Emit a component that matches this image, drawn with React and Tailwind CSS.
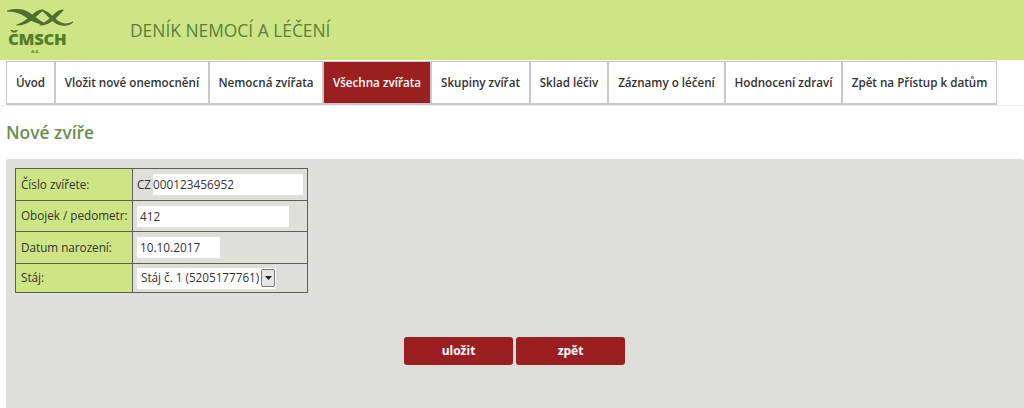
import React from 'react';

const tabs = [
  { label: 'Úvod', width: 'w-[49px]' },
  { label: 'Vložit nové onemocnění', width: 'w-[154px]' },
  { label: 'Nemocná zvířata', width: 'w-[114px]' },
  { label: 'Všechna zvířata', width: 'w-[108px]', active: true },
  { label: 'Skupiny zvířat', width: 'w-[99px]' },
  { label: 'Sklad léčiv', width: 'w-[78px]' },
  { label: 'Záznamy o léčení', width: 'w-[117px]' },
  { label: 'Hodnocení zdraví', width: 'w-[117px]' },
  { label: 'Zpět na Přístup k datům', width: 'w-[155px]' },
];

const Logo = () => (
  <div className="w-[76px] flex flex-col items-start">
    <svg width="66" height="18" viewBox="0 0 66 18" className="mt-[9px] ml-[7px]" stroke="#4f6f2f" strokeWidth="1.2" strokeLinejoin="round">
      <path d="M0 2C8 0 16 0 22 4C28 8 32 12 38 15C30 15 24 11 18 7C12 3 6 2 0 2Z" fill="#4f6f2f" />
      <path d="M10 16C18 14 22 9 27 5C30 2 33 1 36 1C32 4 28 8 24 11C20 14 15 16 10 16Z" fill="#4f6f2f" />
      <path d="M35 1C40 2 44 6 48 10C52 14 55 15 58 15C62 15 65 14 66 13C62 17 54 17 49 14C44 11 40 5 35 1Z" fill="#4f6f2f" />
      <path d="M33 16C40 14 44 9 48 5C51 2 54 1 56 1C53 4 50 8 46 11C42 14 38 16 33 16Z" fill="#4f6f2f" />
    </svg>
    <div className="ml-[8px] mt-[3px] text-[16.5px] leading-[18px] font-extrabold text-[#4f7f2a] font-['Open_Sans',sans-serif] tracking-[-0.2px]">ČMSCH</div>
    <div className="ml-[31px] text-[5px] leading-[6px] font-bold text-[#4f7f2a]">a.s.</div>
  </div>
);

const rowClass = 'border border-[#5e5e55]';
const labelClass = 'bg-[#cde585] border border-[#5e5e55] pl-[5px] w-[117px] p-0';
const valueClass = 'border border-[#5e5e55] pl-[4px] p-0 align-middle';

export default function App() {
  return (
    <div className="w-[1024px] h-[408px] overflow-hidden bg-white font-['Open_Sans',sans-serif] text-[12px] text-[#333333]">
      <header className="h-[60px] bg-[#cde585] flex">
        <Logo />
        <h1 className="ml-[54px] mt-[18px] text-[17.4px] leading-[24px] text-[#5a7f3c]">DENÍK NEMOCÍ A LÉČENÍ</h1>
      </header>

      <nav className="h-[46px] pl-[6px] pt-[1px] flex border-b border-[#eeeeee]">
        {tabs.map((tab) => (
          <div
            key={tab.label}
            className={`${tab.width} h-[44px] flex items-center justify-center border border-b-2 border-[#c9c9c9] text-[11.65px] font-semibold whitespace-nowrap ${tab.active ? 'bg-[#9b1f20] text-white' : 'bg-white text-[#333333]'}`}
          >
            {tab.label}
          </div>
        ))}
      </nav>

      <h2 className="ml-[6px] mt-[15px] text-[17.4px] leading-[22px] font-semibold text-[#6a8f4b]">Nové zvíře</h2>

      <section className="ml-[6px] mt-[16px] h-[249px] bg-[#dededa] rounded-tl-[3px] rounded-tr-[3px] pt-[9px] pl-[9px]">
        <table className="border-collapse w-[293px] text-[11.7px] text-[#333333]">
          <tbody>
            <tr className={`h-[32px] ${rowClass}`}>
              <td className={labelClass}>Číslo zvířete:</td>
              <td className={valueClass}>
                <div className="flex items-center">
                  <span>CZ</span>
                  <span className="ml-[2px] w-[150px] h-[21px] leading-[21px] bg-white text-[11.8px]">000123456952</span>
                </div>
              </td>
            </tr>
            <tr className={`h-[31px] ${rowClass}`}>
              <td className={labelClass}>Obojek / pedometr:</td>
              <td className={valueClass}>
                <div className="w-[152px] h-[21px] leading-[21px] bg-white pl-[3px] text-[11.8px]">412</div>
              </td>
            </tr>
            <tr className={`h-[32px] ${rowClass}`}>
              <td className={labelClass}>Datum narození:</td>
              <td className={valueClass}>
                <div className="w-[83px] h-[21px] leading-[21px] bg-white pl-[3px] text-[11.8px]">10.10.2017</div>
              </td>
            </tr>
            <tr className={`h-[29px] ${rowClass}`}>
              <td className={labelClass}>Stáj:</td>
              <td className={valueClass}>
                <div className="flex items-center w-[139px] h-[21px] bg-white pl-[4px] whitespace-nowrap text-[11.7px]">
                  <span>Stáj č. 1 (5205177761)</span>
                  <span className="ml-[2px] w-[14px] h-[18px] shrink-0 flex items-center justify-center bg-[#e6e6e6] border border-[#77777a] rounded-[2px]">
                    <svg width="7" height="4" viewBox="0 0 7 4"><path d="M0 0H7L3.5 4Z" fill="#222222" /></svg>
                  </span>
                </div>
              </td>
            </tr>
          </tbody>
        </table>

        <div className="mt-[44px] ml-[389px] flex gap-[3px]">
          <button className="w-[109px] h-[28px] bg-[#9b1f20] rounded-[3px] text-white text-[12px] font-bold">uložit</button>
          <button className="w-[109px] h-[28px] bg-[#9b1f20] rounded-[3px] text-white text-[12px] font-bold">zpět</button>
        </div>
      </section>
    </div>
  );
}
